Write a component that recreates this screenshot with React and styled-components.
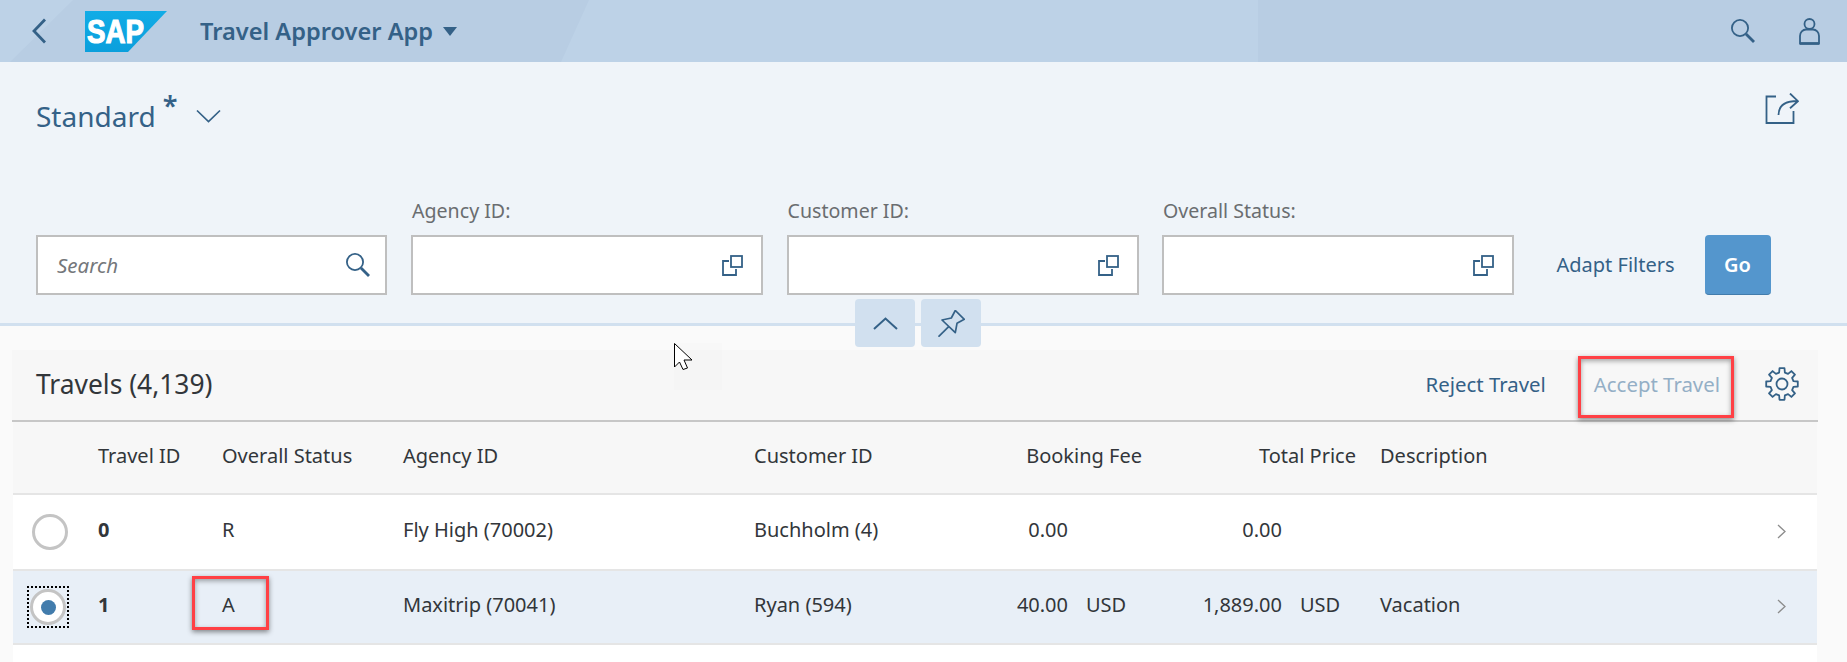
import styled, { createGlobalStyle } from "styled-components";

const GlobalStyle = createGlobalStyle`
  html, body {
    margin: 0;
    padding: 0;
    overflow: hidden;
    background: #fafafa;
  }
  * {
    box-sizing: border-box;
  }
`;

const Page = styled.div`
  position: relative;
  width: 1847px;
  height: 662px;
  overflow: hidden;
  font-family: "Noto Sans", "Open Sans", sans-serif;
  color: #32363a;
`;

const ShellBar = styled.header`
  position: relative;
  isolation: isolate;
  display: flex;
  align-items: center;
  height: 62px;
  padding: 0 27px 0 32px;
  background: #b8cde3;
  color: #346187;

  &::before {
    content: "";
    position: absolute;
    z-index: -1;
    top: 0;
    left: 561px;
    width: 697px;
    height: 62px;
    background: #bdd2e7;
    clip-path: polygon(28px 0, 100% 0, 100% 100%, 0 100%);
  }

  &::after {
    content: "";
    position: absolute;
    z-index: -1;
    top: 0;
    left: 0;
    width: 73px;
    height: 62px;
    background: #bdd2e7;
    clip-path: polygon(0 0, 100% 0, 10px 100%, 0 100%);
  }
`;

const IconButton = styled.button`
  display: flex;
  padding: 0;
  border: 0;
  background: none;
  color: #346187;
`;

const LogoLink = styled(IconButton)`
  margin-left: 39px;
`;

const ShellTitle = styled.div`
  display: flex;
  align-items: center;
  margin-left: 33px;
  font-size: 23.6px;
  font-weight: 600;
`;

const Caret = styled.span`
  width: 0;
  height: 0;
  margin-left: 10px;
  border-left: 7px solid transparent;
  border-right: 7px solid transparent;
  border-top: 9px solid #346187;
`;

const ShellActions = styled.div`
  display: flex;
  align-items: center;
  gap: 44px;
  margin-left: auto;
`;

const FilterArea = styled.section`
  height: 264px;
  padding: 31px 33px 0 36px;
  background: #eff4f9;
  border-bottom: 3px solid #d1e0ef;
`;

const VariantRow = styled.div`
  display: flex;
  align-items: center;
  height: 46px;
`;

const VariantName = styled.h1`
  margin: 0;
  font-size: 28px;
  font-weight: 400;
  color: #346187;
`;

const Star = styled.sup`
  margin: -22px 0 0 7px;
  font-size: 27px;
  font-weight: 600;
  line-height: 1;
  color: #346187;
`;

const VariantChevron = styled.span`
  display: flex;
  margin-left: 19px;
  color: #346187;
`;

const ShareButton = styled(IconButton)`
  margin: 0 15px 15px auto;
`;

const FilterRow = styled.div`
  display: flex;
  align-items: flex-end;
  margin-top: 60px;
`;

const FilterField = styled.div`
  display: flex;
  flex-direction: column;
  width: 352px;
  margin-right: 23.5px;
`;

const SearchField = styled(FilterField)`
  width: 351px;
  margin-right: 24px;
`;

const FilterLabel = styled.label`
  margin: 0 0 12px 1px;
  font-size: 19.6px;
  line-height: 24px;
  color: #6a6d70;
`;

const InputBox = styled.div`
  display: flex;
  align-items: center;
  justify-content: ${(p) => (p.$end ? "flex-end" : "space-between")};
  height: 60px;
  padding: 0 ${(p) => p.$pad}px 0 19px;
  background: #fff;
  border: 2px solid #bfbfbf;
`;

const Placeholder = styled.span`
  font-size: 20.5px;
  font-style: italic;
  color: #74777a;
`;

const AdaptLink = styled.a`
  width: 115px;
  margin: 0 33px 0 19px;
  font-size: 20px;
  line-height: 60px;
  white-space: nowrap;
  color: #346187;
`;

const GoButton = styled.button`
  width: 66px;
  height: 60px;
  padding: 0;
  font-family: inherit;
  font-size: 20px;
  font-weight: 600;
  color: #fff;
  background: #5496cd;
  border: 0;
  border-bottom: 1px solid #427cac;
  border-radius: 4px;
`;

const CollapseBar = styled.div`
  position: absolute;
  top: 299px;
  left: 855px;
  display: flex;
  gap: 6px;
`;

const CollapseButton = styled.button`
  display: flex;
  align-items: center;
  justify-content: center;
  width: 60px;
  height: 48px;
  padding: 0;
  color: #346187;
  background: #d1e0ef;
  border: 0;
  border-radius: 4px;
`;

const Content = styled.main`
  padding: 24px 29px 0 12px;
`;

const TableToolbar = styled.div`
  display: flex;
  align-items: center;
  height: 72px;
  padding: 0 19px 2px 24px;
  background: #f7f7f7;
  border-bottom: 2px solid #c7c7c7;
`;

const TableTitle = styled.h2`
  margin: 0 auto 0 0;
  font-size: 26.4px;
  font-weight: 400;
  color: #32363a;
`;

const ToolbarAction = styled.a`
  margin-right: 48px;
  font-size: 20.4px;
  color: #346187;
`;

const DisabledAction = styled(ToolbarAction)`
  margin-right: 45px;
  color: #94afc6;
`;

const Row = styled.div`
  display: grid;
  grid-template-columns: 85px 124px 181px 351px 246px 142px 214px 1fr 60px;
  align-items: center;
  height: ${(p) => p.$height}px;
  margin: 0 1px;
  padding-bottom: 4px;
  background: ${(p) => (p.$head ? "#f7f7f7" : p.$selected ? "#e8eff7" : "#fff")};
  border-bottom: 2px solid #e5e5e5;
  font-size: 20px;
  line-height: 28px;
`;

const Cell = styled.div`
  font-weight: ${(p) => (p.$bold ? 700 : 400)};
  text-align: ${(p) => (p.$right ? "right" : "left")};
  white-space: nowrap;
`;

const DescriptionCell = styled(Cell)`
  padding-left: 24px;
`;

const Amount = styled.div`
  display: flex;
  justify-content: flex-end;
`;

const Currency = styled.span`
  width: 56px;
  margin-left: 18px;
`;

const RadioCell = styled.div`
  display: flex;
  align-items: center;
  padding-left: ${(p) => (p.$focus ? 15 : 17)}px;
  margin-bottom: -4px;
`;

const FocusRing = styled.span`
  display: flex;
  padding: 2px;
  outline: ${(p) => (p.$focus ? "2px dotted #000" : "none")};
  outline-offset: -1px;
`;

const Radio = styled.span`
  display: flex;
  align-items: center;
  justify-content: center;
  width: 36px;
  height: 36px;
  background: #fff;
  border: 3px solid #c4c4c4;
  border-radius: 50%;

  &::after {
    content: "";
    width: 15px;
    height: 15px;
    background: ${(p) => (p.$checked ? "#427cac" : "transparent")};
    border-radius: 50%;
  }
`;

const RowChevron = styled.div`
  display: flex;
  justify-content: flex-end;
  padding-right: 31px;
  margin-bottom: -2px;
  color: #8c8c8c;
`;

const Highlight = styled.div`
  position: absolute;
  top: ${(p) => p.$top}px;
  left: ${(p) => p.$left}px;
  width: ${(p) => p.$width}px;
  height: ${(p) => p.$height}px;
  border: 3px solid #ff4045;
  box-shadow: 0 2px 5px rgba(0, 0, 0, 0.45), inset 0 2px 5px rgba(0, 0, 0, 0.35);
`;

const CursorBox = styled.div`
  position: absolute;
  top: 343px;
  left: 674px;
  width: 48px;
  height: 47px;
  background: rgba(0, 0, 0, 0.006);
`;

const BackIcon = () => (
  <svg width="14" height="26" viewBox="0 0 14 26" fill="none" stroke="currentColor" strokeWidth="2.800">
    <path d="M13 1.500 2 13l11 11.500" />
  </svg>
);

const SapLogo = () => (
  <svg width="82" height="41" viewBox="0 0 82 41">
    <defs>
      <linearGradient id="sapBlue" x1="0" y1="0" x2="0" y2="1">
        <stop offset="0" stopColor="#12ace6" />
        <stop offset="1" stopColor="#0a9fdc" />
      </linearGradient>
    </defs>
    <path d="M0 0h82L43 41H0z" fill="url(#sapBlue)" />
    <text
      x="2"
      y="32"
      fill="#fff"
      stroke="#fff"
      strokeWidth="1.200"
      fontFamily="Liberation Sans"
      fontWeight="700"
      fontSize="34"
      textLength="57"
      lengthAdjust="spacingAndGlyphs"
    >
      SAP
    </text>
  </svg>
);

const SearchIcon = () => (
  <svg width="24" height="24" viewBox="0 0 24 24" fill="none" stroke="currentColor">
    <circle cx="9" cy="9" r="8.100" strokeWidth="1.800" />
    <path d="m15 15 8 8" strokeWidth="2.800" />
  </svg>
);

const UserIcon = () => (
  <svg width="21" height="27" viewBox="0 0 21 27" fill="none" stroke="currentColor" strokeWidth="1.800">
    <circle cx="10.500" cy="6" r="5" />
    <path d="M1 25.500V18c0-3.800 2.800-6.500 6-6.500h7c3.200 0 6 2.700 6 6.500v7.500z" />
    <path d="M1 25.500h19" strokeWidth="2.600" />
  </svg>
);

const ChevronDown = () => (
  <svg width="25" height="14" viewBox="0 0 25 14" fill="none" stroke="currentColor" strokeWidth="1.700">
    <path d="M1 1.500 12.500 12.500 24 1.500" />
  </svg>
);

const ShareIcon = () => (
  <svg width="34" height="31" viewBox="0 0 34 31" fill="none" stroke="currentColor" strokeWidth="1.800">
    <path d="M11 3.500H1.500V30h27V18" />
    <path d="M13.500 22c0-8 5-14 19-14M25 .5l8 7.700-8 7" />
  </svg>
);

const ValueHelpIcon = () => (
  <svg width="21" height="21" viewBox="0 0 21 21" fill="none" stroke="currentColor" strokeWidth="1.800">
    <path d="M7 6H1v14h13v-6" />
    <rect x="9" y="1" width="11" height="11" />
  </svg>
);

const ChevronUp = () => (
  <svg width="25" height="13" viewBox="0 0 25 13" fill="none" stroke="currentColor" strokeWidth="2">
    <path d="M1 12 12.500 1.500 24 12" />
  </svg>
);

const PinIcon = () => (
  <svg width="27" height="27" viewBox="0 0 27 27" fill="none" stroke="currentColor" strokeWidth="1.700" strokeLinejoin="round">
    <path d="M17.300.5 26.300 9.300 19 13.300 17.300 22.700 4 10 13.300 8z" />
    <path d="M10.700 16.700.5 26.700" />
  </svg>
);

// eight square teeth, tooth on top
const gearPath = () => {
  const point = (r, deg) => {
    const a = ((deg - 90) * Math.PI) / 180;
    return `${(17 + r * Math.cos(a)).toFixed(2)} ${(17 + r * Math.sin(a)).toFixed(2)}`;
  };
  const parts = [];
  for (let i = 0; i < 8; i++) {
    const c = i * 45;
    parts.push(point(11.8, c - 14), point(16, c - 9), point(16, c + 9), point(11.8, c + 14));
  }
  return `M${parts.join("L")}Z`;
};

const GearIcon = () => (
  <svg width="34" height="34" viewBox="0 0 34 34" fill="none" stroke="currentColor" strokeWidth="1.800" strokeLinejoin="round">
    <path d={gearPath()} />
    <circle cx="17" cy="17" r="5.500" />
  </svg>
);

const SmallChevron = () => (
  <svg width="9" height="15" viewBox="0 0 9 15" fill="none" stroke="currentColor" strokeWidth="1.300">
    <path d="m1 1 7 6.500L1 14" />
  </svg>
);

const CursorIcon = () => (
  <svg width="19" height="28" viewBox="0 0 19 28" display="block">
    <path d="M.5.5V24l5-5 3.500 7.500L13.500 25 10 17h8z" fill="#fff" stroke="#000" strokeWidth="1" />
  </svg>
);

const rows = [
  { id: "0", status: "R", agency: "Fly High (70002)", customer: "Buchholm (4)", fee: "0.00", total: "0.00", currency: "", description: "", height: 76 },
  { id: "1", status: "A", agency: "Maxitrip (70041)", customer: "Ryan (594)", fee: "40.00", total: "1,889.00", currency: "USD", description: "Vacation", height: 74, selected: true },
];

const filters = ["Agency ID:", "Customer ID:", "Overall Status:"];

const App = () => (
  <Page>
    <GlobalStyle />
    <ShellBar>
      <IconButton>
        <BackIcon />
      </IconButton>
      <LogoLink>
        <SapLogo />
      </LogoLink>
      <ShellTitle>
        Travel Approver App
        <Caret />
      </ShellTitle>
      <ShellActions>
        <IconButton>
          <SearchIcon />
        </IconButton>
        <IconButton>
          <UserIcon />
        </IconButton>
      </ShellActions>
    </ShellBar>

    <FilterArea>
      <VariantRow>
        <VariantName>Standard</VariantName>
        <Star>*</Star>
        <VariantChevron>
          <ChevronDown />
        </VariantChevron>
        <ShareButton>
          <ShareIcon />
        </ShareButton>
      </VariantRow>
      <FilterRow>
        <SearchField>
          <InputBox $pad={15}>
            <Placeholder>Search</Placeholder>
            <IconButton>
              <SearchIcon />
            </IconButton>
          </InputBox>
        </SearchField>
        {filters.map((label) => (
          <FilterField key={label}>
            <FilterLabel>{label}</FilterLabel>
            <InputBox $pad={18} $end>
              <IconButton>
                <ValueHelpIcon />
              </IconButton>
            </InputBox>
          </FilterField>
        ))}
        <AdaptLink>Adapt Filters</AdaptLink>
        <GoButton>Go</GoButton>
      </FilterRow>
    </FilterArea>

    <CollapseBar>
      <CollapseButton>
        <ChevronUp />
      </CollapseButton>
      <CollapseButton>
        <PinIcon />
      </CollapseButton>
    </CollapseBar>

    <Content>
      <TableToolbar>
        <TableTitle>Travels (4,139)</TableTitle>
        <ToolbarAction>Reject Travel</ToolbarAction>
        <DisabledAction>Accept Travel</DisabledAction>
        <IconButton>
          <GearIcon />
        </IconButton>
      </TableToolbar>
      <Row $head $height={73}>
        <div />
        <Cell>Travel ID</Cell>
        <Cell>Overall Status</Cell>
        <Cell>Agency ID</Cell>
        <Cell>Customer ID</Cell>
        <Cell $right>Booking Fee</Cell>
        <Cell $right>Total Price</Cell>
        <DescriptionCell>Description</DescriptionCell>
      </Row>
      {rows.map((row) => (
        <Row key={row.id} $selected={row.selected} $height={row.height}>
          <RadioCell $focus={row.selected}>
            <FocusRing $focus={row.selected}>
              <Radio $checked={row.selected} />
            </FocusRing>
          </RadioCell>
          <Cell $bold>{row.id}</Cell>
          <Cell>{row.status}</Cell>
          <Cell>{row.agency}</Cell>
          <Cell>{row.customer}</Cell>
          <Amount>
            <span>{row.fee}</span>
            <Currency>{row.currency}</Currency>
          </Amount>
          <Amount>
            <span>{row.total}</span>
            <Currency>{row.currency}</Currency>
          </Amount>
          <DescriptionCell>{row.description}</DescriptionCell>
          <RowChevron>
            <SmallChevron />
          </RowChevron>
        </Row>
      ))}
      <Row $height={74} />
    </Content>

    <Highlight $top={576} $left={192} $width={77} $height={54} />
    <Highlight $top={356} $left={1578} $width={156} $height={62} />
    <CursorBox>
      <CursorIcon />
    </CursorBox>
  </Page>
);

export default App;
